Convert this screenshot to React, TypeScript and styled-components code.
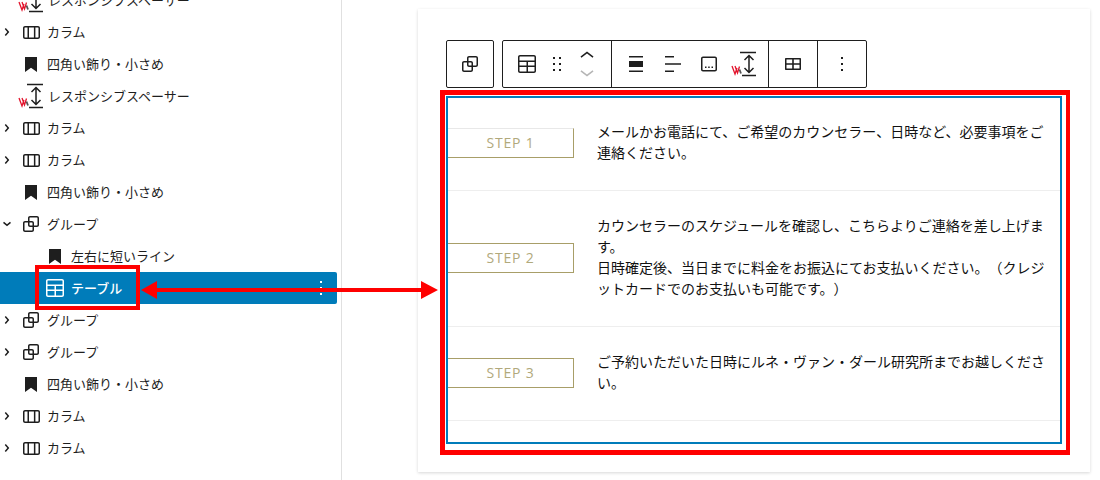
import React from "react";
import styled, { createGlobalStyle } from "styled-components";

const GlobalStyle = createGlobalStyle`
  html, body {
    margin: 0;
    padding: 0;
    background: #fff;
  }
  body {
    font-family: "Noto Sans CJK JP", "Liberation Sans", sans-serif;
    color: #1e1e1e;
  }
  svg {
    flex-shrink: 0;
  }
`;

const Page = styled.div`
  position: relative;
  display: flex;
  width: 1100px;
  height: 480px;
  overflow: hidden;
  background: #fff;
`;

/* list view */
const Sidebar = styled.aside`
  flex: 0 0 342px;
  box-sizing: border-box;
  padding-right: 4px;
  border-right: 1px solid #e0e0e0;
`;

const TreeList = styled.ul`
  list-style: none;
  margin: -16px 0 0;
  padding: 0;
`;

const TreeRow = styled.li<{ $depth?: number; $selected?: boolean }>`
  display: flex;
  align-items: center;
  height: 32px;
  padding-left: ${(p) => (p.$depth ? 24 * p.$depth : 0)}px;
  border-radius: ${(p) => (p.$selected ? "0 2px 2px 0" : "0")};
  background: ${(p) => (p.$selected ? "#007cba" : "transparent")};
  color: ${(p) => (p.$selected ? "#fff" : "#1e1e1e")};
  font-size: 13px;
  font-weight: ${(p) => (p.$selected ? 500 : 400)};
`;

const Twist = styled.span`
  display: flex;
  flex: 0 0 14px;
  min-width: 0;
  justify-content: center;
  margin-right: 5px;
`;

const RowIcon = styled.span`
  display: flex;
  flex: 0 0 24px;
  justify-content: center;
  margin-right: 4px;
`;

const RowLabel = styled.span`
  flex: 1;
  color: inherit;
  white-space: nowrap;
  transform: translateY(-1.5px);
`;

const RowMenu = styled.span`
  display: flex;
  margin-right: 4px;
`;

const SpacerSlot = styled.span`
  display: flex;
  flex: 0 0 32px;
  margin-left: 16px;
`;

/* editor canvas */
const Canvas = styled.main`
  flex: 1;
  padding: 9px 10px 0 76px;
`;

const Sheet = styled.section`
  box-sizing: border-box;
  height: 463px;
  padding: 31px 28px 0;
  background: #fff;
  box-shadow: 0 1px 3px rgba(0, 0, 0, 0.16);
`;

const ToolbarRow = styled.div`
  display: flex;
  gap: 8px;
  height: 48px;
  margin-bottom: 8px;
`;

const ToolGroup = styled.div`
  display: flex;
  border: 1px solid #1e1e1e;
  border-radius: 2px;
`;

const ToolSection = styled.div`
  display: flex;
  & + & {
    border-left: 1px solid #1e1e1e;
  }
`;

const ToolButton = styled.span<{ $w: number }>`
  display: flex;
  align-items: center;
  justify-content: center;
  box-sizing: border-box;
  width: ${(p) => p.$w}px;
  color: #1e1e1e;
`;

const SpacerTool = styled(ToolButton)`
  padding-right: 9px;
`;

const Movers = styled.span`
  display: flex;
  flex-direction: column;
  svg + svg {
    margin-top: -8px;
  }
`;

const StepTable = styled.div`
  box-sizing: border-box;
  width: 616px;
  height: 348px;
  border: 2px solid #007cba;
`;

const StepRow = styled.div<{ $h: number }>`
  display: grid;
  grid-template-columns: 126px 1fr;
  align-items: center;
  box-sizing: border-box;
  height: ${(p) => p.$h}px;
  border-bottom: 1px solid #eee;
`;

const StepLabel = styled.div<{ $first?: boolean }>`
  box-sizing: border-box;
  height: 30px;
  margin-bottom: 2px;
  border: 1px solid #a89e68;
  border-left: none;
  border-top-color: ${(p) => (p.$first ? "#e8e8e8" : "#a89e68")};
  color: #b1a97c;
  font-family: "Open Sans", "Liberation Sans", sans-serif;
  font-size: 14px;
  line-height: 28px;
  letter-spacing: 0.8px;
  text-align: center;
`;

const StepText = styled.p`
  margin: 0;
  padding: 0 13px 4px 23px;
  color: #111;
  font-size: 14px;
  line-height: 21px;
  text-spacing-trim: space-all;
`;

/* annotations drawn over the screenshot */
const RedFrame = styled.div<{ $x: number; $y: number; $w: number; $h: number; $b: string }>`
  position: absolute;
  left: ${(p) => p.$x}px;
  top: ${(p) => p.$y}px;
  box-sizing: border-box;
  width: ${(p) => p.$w}px;
  height: ${(p) => p.$h}px;
  border: solid #f00;
  border-width: ${(p) => p.$b};
`;

const ArrowLayer = styled.svg`
  position: absolute;
  left: 141px;
  top: 279px;
`;

type IconProps = { size?: number; fill?: string };

const Icon = ({ d, size = 24, fill = "currentColor" }: IconProps & { d: string }) => (
  <svg width={size} height={size} viewBox="0 0 24 24" fill={fill}>
    <path d={d} />
  </svg>
);

const P = {
  right:
    "M10.8622 8.04053L14.2805 12.0286L10.8622 16.0167L9.72327 15.0405L12.3049 12.0286L9.72327 9.01672L10.8622 8.04053Z",
  down: "m15.99 10.889-3.988 3.418-3.988-3.418.976-1.14 3.012 2.582 3.012-2.581.976 1.139Z",
  columns:
    "M19 6H6c-1.1 0-2 .9-2 2v9c0 1.1.9 2 2 2h13c1.1 0 2-.9 2-2V8c0-1.1-.9-2-2-2zm-4.1 1.5v10H10v-10h4.9zM5.5 17V8c0-.3.2-.5.5-.5h2.5v10H6c-.3 0-.5-.2-.5-.5zm14 0c0 .3-.2.5-.5.5h-2.6v-10H19c.3 0 .5.2.5.5v9z",
  group:
    "M18 4h-7c-1.1 0-2 .9-2 2v3H6c-1.1 0-2 .9-2 2v7c0 1.1.9 2 2 2h7c1.1 0 2-.9 2-2v-3h3c1.1 0 2-.9 2-2V6c0-1.1-.9-2-2-2zm-4.5 14c0 .3-.2.5-.5.5H6c-.3 0-.5-.2-.5-.5v-7c0-.3.2-.5.5-.5h3V13c0 1.1.9 2 2 2h2.5v3zm0-4.5H11c-.3 0-.5-.2-.5-.5v-2.5H13c.3 0 .5.2.5.5v2.5zm5-.5c0 .3-.2.5-.5.5h-3V11c0-1.1-.9-2-2-2h-2.5V6c0-.3.2-.5.5-.5h7c.3 0 .5.2.5.5v7z",
  table:
    "M19 3H5c-1.1 0-2 .9-2 2v14c0 1.1.9 2 2 2h14c1.1 0 2-.9 2-2V5c0-1.1-.9-2-2-2zM5 4.5h14c.3 0 .5.2.5.5v3.5h-15V5c0-.3.2-.5.5-.5zm8 5.5h6.5v3.5H13V10zm-1.5 3.5h-7V10h7v3.5zm-7 5.5v-4h7v4.5H5c-.3 0-.5-.2-.5-.5zm14.5.5h-6V15h6.5v4c0 .3-.2.5-.5.5z",
  bookmark: "M6 5h12v15l-6-4.2L6 20z",
  drag: "M8 7h2V5H8v2zm0 6h2v-2H8v2zm0 6h2v-2H8v2zm6-14v2h2V5h-2zm0 8h2v-2h-2v2zm0 6h2v-2h-2v2z",
  more: "M13 19h-2v-2h2v2zm0-6h-2v-2h2v2zm0-6h-2V5h2v2z",
  up: "M5.5 12.6L12 7.4l6.5 5.2-.9 1.2L12 9.4l-5.6 4.4-.9-1.2z",
  dn: "M18.5 11.4L12 16.6l-6.5-5.2.9-1.2L12 14.6l5.6-4.4.9 1.2z",
  alignNone: "M19 5.5H5V4h14v1.5ZM19 20H5v-1.5h14V20ZM5 9h14v6H5V9Z",
  justify: "M4 4h9v1.5H4zM4 11.2h16v1.5H4zM4 18.5h9V20H4z",
  boxDots:
    "M6 4.5h12c1.1 0 2 .9 2 2v11c0 1.1-.9 2-2 2H6c-1.1 0-2-.9-2-2v-11c0-1.1.9-2 2-2zm0 1.5c-.3 0-.5.2-.5.5v11c0 .3.2.5.5.5h12c.3 0 .5-.2.5-.5v-11c0-.3-.2-.5-.5-.5H6zM8 14.5h1.5V16H8zM11.2 14.5h1.5V16h-1.5zM14.5 14.5H16V16h-1.5z",
  tableSmall:
    "M5 6h14c.6 0 1 .4 1 1v10c0 .6-.4 1-1 1H5c-.6 0-1-.4-1-1V7c0-.6.4-1 1-1zm.5 1.5v3.7h5.7V7.5H5.5zm7.3 0v3.7h5.7V7.5h-5.7zm-7.3 5.3v3.7h5.7v-3.7H5.5zm7.3 0v3.7h5.7v-3.7h-5.7z",
};

// spacer block icon with the small red plugin mark beside it
const SpacerIcon = () => (
  <svg width="32" height="32" viewBox="0 0 32 32" fill="none">
    <path d="M11 4.5h16M13 27.5h14" stroke="#1e1e1e" strokeWidth="1.4" />
    <path
      d="M20 8v16M15.5 12l4.5-4.5 4.5 4.5M15.5 20l4.5 4.5 4.5-4.5"
      stroke="#1e1e1e"
      strokeWidth="1.5"
    />
    <path d="M3 18l3 8 2-6M6 18l2.5 7 2-6.5" stroke="#e3132c" strokeWidth="1.3" />
    <path d="M10.5 21.5l1.5 4" stroke="#555" strokeWidth="1.8" />
  </svg>
);

const TreeItem = ({
  kind,
  label,
  open,
  depth,
  selected,
}: {
  kind: "columns" | "group" | "bookmark" | "table";
  label: string;
  open?: boolean;
  depth?: number;
  selected?: boolean;
}) => (
  <TreeRow $depth={depth} $selected={selected}>
    <Twist>
      {kind === "columns" || kind === "group" ? <Icon d={open ? P.down : P.right} /> : null}
    </Twist>
    <RowIcon>
      <Icon d={P[kind]} />
    </RowIcon>
    <RowLabel>{label}</RowLabel>
    {selected && (
      <RowMenu>
        <Icon d={P.more} />
      </RowMenu>
    )}
  </TreeRow>
);

const SpacerItem = () => (
  <TreeRow>
    <SpacerSlot>
      <SpacerIcon />
    </SpacerSlot>
    <RowLabel>レスポンシブスペーサー</RowLabel>
  </TreeRow>
);

export default function App() {
  return (
    <>
      <GlobalStyle />
      <Page>
        <Sidebar>
          <TreeList>
            <SpacerItem />
            <TreeItem kind="columns" label="カラム" />
            <TreeItem kind="bookmark" label="四角い飾り・小さめ" />
            <SpacerItem />
            <TreeItem kind="columns" label="カラム" />
            <TreeItem kind="columns" label="カラム" />
            <TreeItem kind="bookmark" label="四角い飾り・小さめ" />
            <TreeItem kind="group" label="グループ" open />
            <TreeItem kind="bookmark" label="左右に短いライン" depth={1} />
            <TreeItem kind="table" label="テーブル" depth={1} selected />
            <TreeItem kind="group" label="グループ" />
            <TreeItem kind="group" label="グループ" />
            <TreeItem kind="bookmark" label="四角い飾り・小さめ" />
            <TreeItem kind="columns" label="カラム" />
            <TreeItem kind="columns" label="カラム" />
          </TreeList>
        </Sidebar>

        <Canvas>
          <Sheet>
            <ToolbarRow>
              <ToolGroup>
                <ToolSection>
                  <ToolButton $w={46}>
                    <Icon d={P.group} />
                  </ToolButton>
                </ToolSection>
              </ToolGroup>
              <ToolGroup>
                <ToolSection>
                  <ToolButton $w={48}>
                    <Icon d={P.table} />
                  </ToolButton>
                  <ToolButton $w={12}>
                    <Icon d={P.drag} />
                  </ToolButton>
                  <ToolButton $w={48}>
                    <Movers>
                      <Icon d={P.up} />
                      <Icon d={P.dn} fill="#b5b5b5" />
                    </Movers>
                  </ToolButton>
                </ToolSection>
                <ToolSection>
                  <ToolButton $w={47}>
                    <Icon d={P.alignNone} />
                  </ToolButton>
                  <ToolButton $w={28}>
                    <Icon d={P.justify} />
                  </ToolButton>
                  <ToolButton $w={44}>
                    <Icon d={P.boxDots} />
                  </ToolButton>
                  <SpacerTool $w={37}>
                    <SpacerIcon />
                  </SpacerTool>
                </ToolSection>
                <ToolSection>
                  <ToolButton $w={48}>
                    <Icon d={P.tableSmall} />
                  </ToolButton>
                </ToolSection>
                <ToolSection>
                  <ToolButton $w={48}>
                    <Icon d={P.more} />
                  </ToolButton>
                </ToolSection>
              </ToolGroup>
            </ToolbarRow>

            <StepTable>
              <StepRow $h={93}>
                <StepLabel $first>STEP 1</StepLabel>
                <StepText>
                  メールかお電話にて、ご希望のカウンセラー、日時など、必要事項をご連絡ください。
                </StepText>
              </StepRow>
              <StepRow $h={136}>
                <StepLabel>STEP 2</StepLabel>
                <StepText>
                  カウンセラーのスケジュールを確認し、こちらよりご連絡を差し上げます。
                  <br />
                  日時確定後、当日までに料金をお振込にてお支払いください。（クレジットカードでのお支払いも可能です。）
                </StepText>
              </StepRow>
              <StepRow $h={94}>
                <StepLabel>STEP 3</StepLabel>
                <StepText>
                  ご予約いただいた日時にルネ・ヴァン・ダール研究所までお越しください。
                </StepText>
              </StepRow>
            </StepTable>
          </Sheet>
        </Canvas>

        <RedFrame $x={35} $y={265} $w={105} $h={45} $b="4px" />
        <RedFrame $x={440} $y={90} $w={630} $h={365} $b="5px 4px 5px 5px" />
        <ArrowLayer width="298" height="22" viewBox="0 0 298 22">
          <path d="M14 9h270v4H14z" fill="#f00" />
          <path d="M0 11l16-9v18zM297 11l-17-9v18z" fill="#f00" />
        </ArrowLayer>
      </Page>
    </>
  );
}
